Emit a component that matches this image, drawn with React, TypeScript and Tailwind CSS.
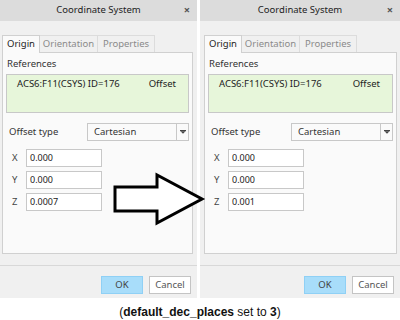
const ui = { fontFamily: '"Noto Sans", "Open Sans", sans-serif' };

function Field({ label, value }: { label: string; value: string }) {
  return (
    <div className="flex items-center h-[18px]">
      <span className="w-[20px] pl-[6px] text-[9.5px] text-[#444]">{label}</span>
      <div className="w-[76px] h-[18px] bg-white border border-[#c8c8c8] px-[3px] flex items-center text-[9px] text-[#222]">
        {value}
      </div>
    </div>
  );
}

function Dialog({ z, width, pad }: { z: string; width: string; pad: string }) {
  return (
    <div className={`${width} h-[298px] bg-[#f0f0f0] flex flex-col shrink-0`} style={ui}>
      {/* barra de título */}
      <div className="relative h-[21px] bg-[#dcdcdc] flex items-center justify-center text-[9.5px] text-[#222]">
        Coordinate System
        <span className="absolute right-[7px] top-[4px] text-[11px] leading-[12px] text-[#555] font-bold">×</span>
      </div>

      <div className={`${pad} pt-[13px] flex flex-col`}>
        {/* abas */}
        <div className="flex h-[18px] items-end text-[9.5px]">
          <div className="h-[18px] w-[38px] bg-[#fafafa] border border-b-0 border-[#d0d0d0] flex items-center justify-center text-[#222] relative z-10 -mb-px">
            Origin
          </div>
          <div className="h-[17px] w-[58px] border border-l-0 border-b-0 border-[#dcdcdc] flex items-center justify-center text-[#8a8a8a]">
            Orientation
          </div>
          <div className="h-[17px] w-[57px] border border-l-0 border-b-0 border-[#dcdcdc] flex items-center justify-center text-[#8a8a8a]">
            Properties
          </div>
        </div>

        {/* painel */}
        <div className="h-[202px] bg-[#fafafa] border border-[#d0d0d0] px-[3px] pt-[3px] flex flex-col">
          <div className="text-[9.5px] text-[#333] pl-[1px] h-[16px] leading-[16px]">References</div>
          <div className="mt-[2px] h-[39px] bg-[#e7f6da] border border-[#c8c8c8] flex justify-between pl-[10px] pr-[12px] pt-[2px] text-[9.5px] text-[#222]">
            <span>ACS6:F11(CSYS) ID=176</span>
            <span>Offset</span>
          </div>
          <div className="mt-[10px] flex items-center h-[18px] justify-between">
            <span className="pl-[3px] text-[9.5px] text-[#333]">Offset type</span>
            <div className="w-[102px] h-[18px] bg-[#fafafa] border border-[#c8c8c8] flex items-center text-[9.5px] text-[#333]">
              <span className="flex-1 pl-[6px]">Cartesian</span>
              <div className="w-[12px] h-full border-l border-[#c8c8c8] flex items-center justify-center">
                <svg width="6" height="4" viewBox="0 0 6 4">
                  <rect x="0" y="0" width="6" height="1.2" fill="#444" />
                  <polygon points="0.5,1.2 5.5,1.2 3,3.8" fill="#444" />
                </svg>
              </div>
            </div>
          </div>
          <div className="mt-[8px] flex flex-col gap-[4px]">
            <Field label="X" value="0.000" />
            <Field label="Y" value="0.000" />
            <Field label="Z" value={z} />
          </div>
        </div>
      </div>

      {/* rodapé */}
      <div className="mt-[11px] border-t border-[#d8d8d8] flex-1 flex justify-end items-start pt-[10px] pr-[6px] gap-[6px] text-[9.5px]">
        <div className="w-[42px] h-[18px] bg-[#a8ddfa] border border-[#8fd0f5] flex items-center justify-center text-[#444]">OK</div>
        <div className="w-[42px] h-[18px] bg-white border border-[#c4c4c4] flex items-center justify-center text-[#555]">Cancel</div>
      </div>
    </div>
  );
}

export default function App() {
  return (
    <div className="relative w-[400px] h-[320px] bg-white overflow-hidden">
      <div className="flex gap-[3px]">
        <Dialog z="0.0007" width="w-[197px]" pad="px-[2px] pr-[4px]" />
        <Dialog z="0.001" width="w-[200px]" pad="pl-[4px] pr-[3px]" />
      </div>
      <div
        className="mt-[7px] text-center text-[12px] leading-[14px] text-[#111]"
        style={{ fontFamily: '"Liberation Sans", Arial, sans-serif' }}
      >
        (<b>default_dec_places</b> set to <b>3</b>)
      </div>

      {/* seta sobreposta */}
      <svg className="absolute left-0 top-0 pointer-events-none" width="400" height="320">
        <polygon
          points="115,187 157,187 157,175 202,199 157,223 157,211 115,211"
          fill="white"
          stroke="black"
          strokeWidth="3"
          strokeLinejoin="miter"
        />
      </svg>
    </div>
  );
}
